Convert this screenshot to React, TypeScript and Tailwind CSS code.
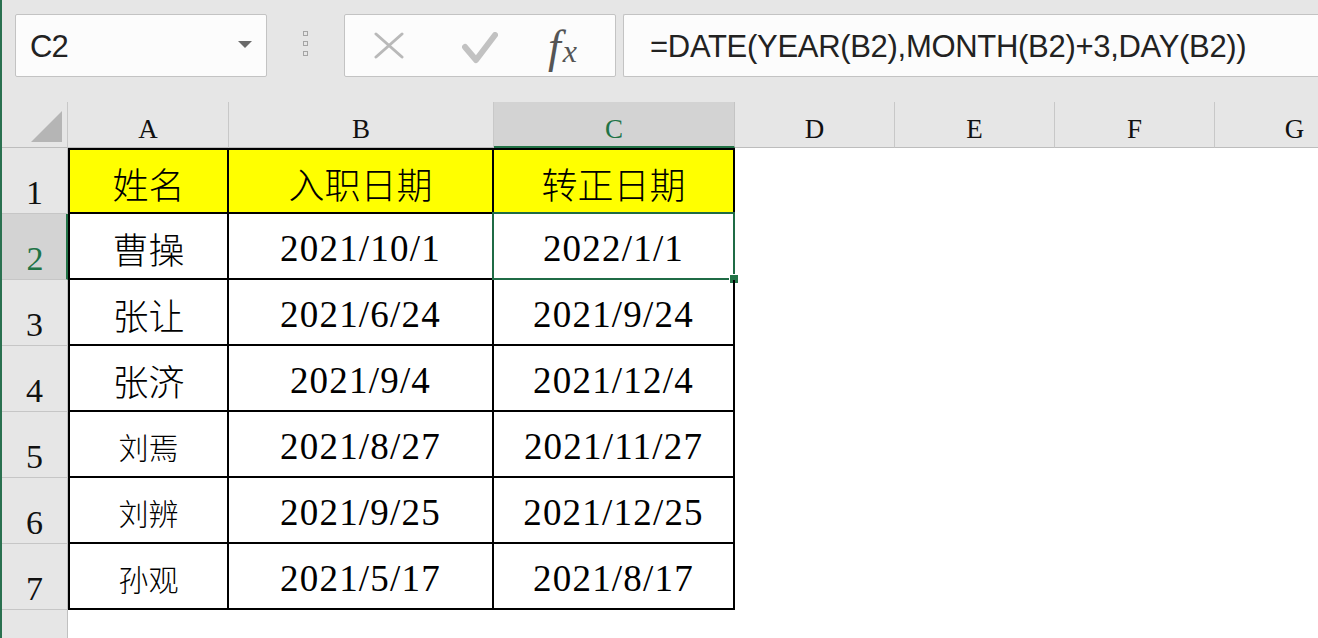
import React from "react";

const rows = [
  { n: 2, name: "曹操", b: "2021/10/1", c: "2022/1/1", small: false },
  { n: 3, name: "张让", b: "2021/6/24", c: "2021/9/24", small: false },
  { n: 4, name: "张济", b: "2021/9/4", c: "2021/12/4", small: false },
  { n: 5, name: "刘焉", b: "2021/8/27", c: "2021/11/27", small: true },
  { n: 6, name: "刘辨", b: "2021/9/25", c: "2021/12/25", small: true },
  { n: 7, name: "孙观", b: "2021/5/17", c: "2021/8/17", small: true },
];

function Toolbar() {
  return (
    <div className="h-[102px] shrink-0 bg-[#e6e6e6] flex items-start pt-[14px]">
      {/* Name box */}
      <div className="ml-[13px] w-[252px] h-[63px] bg-[#fcfcfc] border border-[#c3c3c3] rounded-[2px] flex items-center pl-[14px] pr-[14px]">
        <span className="flex-1 font-['Liberation_Sans',sans-serif] text-[31px] tracking-[-1px] text-[#222] leading-none pt-[2px]">
          C2
        </span>
        <svg width="14" height="8" viewBox="0 0 14 8" className="mt-[-2px]">
          <polygon points="0,0 14,0 7,7" fill="#6a6a6a" />
        </svg>
      </div>
      {/* Grip dots */}
      <div className="ml-[36px] mt-[17px] flex flex-col gap-[5px]">
        <div className="w-[5px] h-[5px] border border-[#a5a5a5]" />
        <div className="w-[5px] h-[5px] border border-[#a5a5a5]" />
        <div className="w-[5px] h-[5px] border border-[#a5a5a5]" />
      </div>
      {/* Buttons box */}
      <div className="ml-[36px] w-[272px] h-[63px] bg-[#fcfcfc] border border-[#c3c3c3] rounded-[2px] flex items-center">
        <svg width="30" height="27" viewBox="0 0 30 27" className="ml-[29px]">
          <line x1="2" y1="2" x2="28" y2="25" stroke="#b9b9b9" strokeWidth="3" strokeLinecap="round" />
          <line x1="28" y1="2" x2="2" y2="25" stroke="#b9b9b9" strokeWidth="3" strokeLinecap="round" />
        </svg>
        <svg width="36" height="32" viewBox="0 0 36 32" className="ml-[58px] mt-[4px]">
          <polyline points="3,15 14,28 33,3" fill="none" stroke="#c2c2c2" strokeWidth="6" strokeLinecap="round" strokeLinejoin="round" />
        </svg>
        <span className="ml-[50px] font-['Liberation_Serif',serif] italic text-[#555] leading-none flex items-baseline mt-[2px]">
          <span className="text-[46px]">f</span>
          <span className="text-[32px] ml-[2px]">x</span>
        </span>
      </div>
      {/* Formula box */}
      <div className="ml-[7px] flex-1 h-[63px] bg-[#fcfcfc] border border-r-0 border-[#c3c3c3] rounded-l-[2px] flex items-center pl-[26px]">
        <span className="font-['Liberation_Sans',sans-serif] text-[31px] tracking-[-0.3px] text-[#222] leading-none pt-[1px] whitespace-nowrap">
          =DATE(YEAR(B2),MONTH(B2)+3,DAY(B2))
        </span>
      </div>
    </div>
  );
}

function ColHeader({ label, w, selected }: { label: string; w: string; selected?: boolean }) {
  if (selected) {
    return (
      <div className={`${w} shrink-0 h-full bg-[#d3d3d3] border-r border-[#c4c4c4] border-b-2 border-b-[#217346] flex items-end justify-center pb-[3px]`}>
        <span className="font-['Liberation_Serif',serif] text-[27px] leading-none text-[#217346]">{label}</span>
      </div>
    );
  }
  return (
    <div className={`${w} shrink-0 h-full bg-[#e6e6e6] border-r border-[#c8c8c8] border-b border-b-[#bdbdbd] flex items-end justify-center pb-[4px]`}>
      <span className="font-['Liberation_Serif',serif] text-[27px] leading-none text-[#111]">{label}</span>
    </div>
  );
}

function HeaderRow() {
  return (
    <div className="h-[46px] shrink-0 flex">
      <div className="w-[66px] shrink-0 h-full bg-[#e6e6e6] border-r border-[#c8c8c8] border-b border-b-[#bdbdbd] flex items-end justify-end pr-[5px] pb-[5px]">
        <svg width="31" height="31" viewBox="0 0 31 31">
          <polygon points="31,0 31,31 0,31" fill="#b5b5b5" />
        </svg>
      </div>
      <ColHeader label="A" w="w-[161px]" />
      <ColHeader label="B" w="w-[265px]" />
      <ColHeader label="C" w="w-[241px]" selected />
      <ColHeader label="D" w="w-[160px]" />
      <ColHeader label="E" w="w-[160px]" />
      <ColHeader label="F" w="w-[160px]" />
      <ColHeader label="G" w="w-[160px]" />
    </div>
  );
}

function RowHeader({ n, selected }: { n: number; selected?: boolean }) {
  if (selected) {
    return (
      <div className="w-[66px] shrink-0 h-full bg-[#d3d3d3] border-r-2 border-[#217346] border-b border-b-[#c6c6c6] flex items-end justify-center pb-[3px]">
        <span className="font-['Liberation_Serif',serif] text-[34px] leading-none text-[#217346] ml-[2px]">{n}</span>
      </div>
    );
  }
  return (
    <div className="w-[66px] shrink-0 h-full bg-[#e6e6e6] border-r border-[#c0c0c0] border-b border-b-[#c6c6c6] flex items-end justify-center pb-[3px]">
      <span className="font-['Liberation_Serif',serif] text-[34px] leading-none text-[#111]">{n}</span>
    </div>
  );
}

const cjk = "font-['Noto_Sans_CJK_SC',sans-serif] font-light leading-none text-black";
const num = "font-['Liberation_Serif',serif] text-[37px] tracking-[1.2px] leading-none text-black";

export default function App() {
  return (
    <div className="w-[1318px] h-[638px] overflow-hidden bg-white border-l-2 border-[#2a7150] flex flex-col">
      <Toolbar />
      <HeaderRow />
      {/* Row 1 */}
      <div className="h-[66px] shrink-0 flex">
        <RowHeader n={1} />
        <div className="w-[161px] shrink-0 bg-[#ffff00] border-2 border-black flex items-center justify-center pt-[3px]">
          <span className={`${cjk} text-[36px]`}>姓名</span>
        </div>
        <div className="w-[265px] shrink-0 bg-[#ffff00] border-2 border-l-0 border-black flex items-center justify-center pt-[3px]">
          <span className={`${cjk} text-[36px]`}>入职日期</span>
        </div>
        <div className="w-[241px] shrink-0 bg-[#ffff00] border-2 border-l-0 border-black flex items-center justify-center pt-[3px]">
          <span className={`${cjk} text-[36px]`}>转正日期</span>
        </div>
        <div className="flex-1" />
      </div>
      {rows.map((r) => (
        <div key={r.n} className="h-[66px] shrink-0 flex">
          <RowHeader n={r.n} selected={r.n === 2} />
          <div className="w-[161px] shrink-0 border-2 border-t-0 border-black flex items-center justify-center pt-[4px]">
            {r.small ? (
              <span className={`${cjk} text-[30px]`}>{r.name}</span>
            ) : (
              <span className={`${cjk} text-[36px]`}>{r.name}</span>
            )}
          </div>
          <div className="w-[265px] shrink-0 border-r-2 border-b-2 border-black flex items-center justify-center pt-[5px]">
            <span className={num}>{r.b}</span>
          </div>
          <div className="relative w-[241px] shrink-0 border-r-2 border-b-2 border-black flex items-center justify-center pt-[5px]">
            <span className={num}>{r.c}</span>
            {r.n === 2 && (
              <>
                <div className="absolute left-[-2px] top-[-2px] right-[-2px] bottom-[-2px] border-2 border-[#1f6b45]" />
                <div className="absolute right-[-6px] bottom-[-6px] w-[10px] h-[10px] bg-[#217346] border border-white" />
              </>
            )}
          </div>
          <div className="flex-1" />
        </div>
      ))}
      {/* Row 8 partial */}
      <div className="flex-1 flex">
        <div className="w-[66px] shrink-0 h-full bg-[#e6e6e6] border-r border-[#c0c0c0]" />
        <div className="flex-1" />
      </div>
    </div>
  );
}
